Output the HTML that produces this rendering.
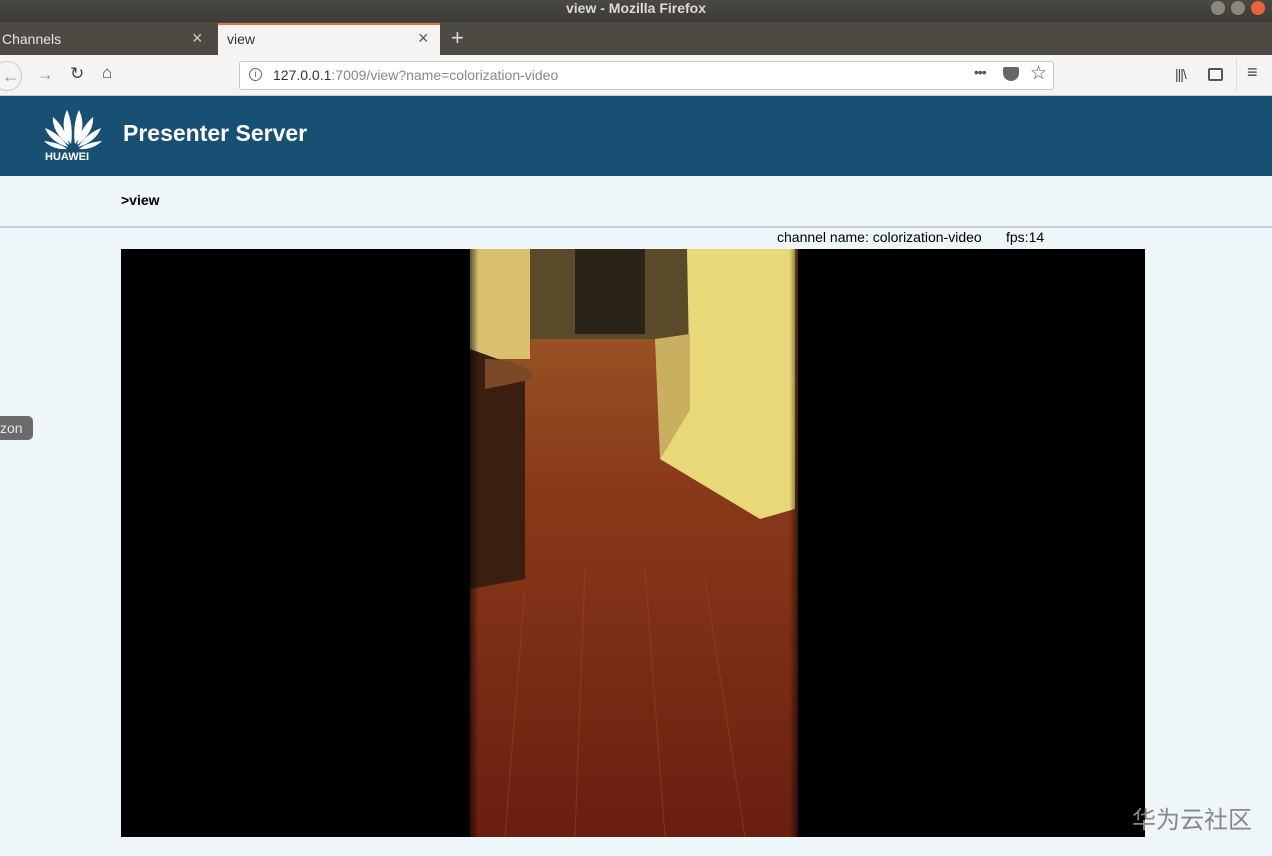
<!DOCTYPE html>
<html><head><meta charset="utf-8"><style>
*{margin:0;padding:0;box-sizing:border-box}
body{width:1272px;height:856px;overflow:hidden;background:#eef6f9;font-family:"Liberation Sans",sans-serif;position:relative}
.abs{position:absolute}
</style></head><body>
<div class="abs" style="left:0;top:0;width:1272px;height:22px;background:linear-gradient(#4a4843,#3d3b37);color:#dfdbd2;font-size:14px;font-weight:bold;text-align:center;line-height:16px">view - Mozilla Firefox</div>
<div class="abs" style="left:1211px;top:1px;width:14px;height:14px;border-radius:50%;background:#8a877f"></div>
<div class="abs" style="left:1231px;top:1px;width:14px;height:14px;border-radius:50%;background:#8a877f"></div>
<div class="abs" style="left:1251px;top:1px;width:14px;height:14px;border-radius:50%;background:#e8643a"></div>
<div class="abs" style="left:0;top:22px;width:1272px;height:33px;background:#4d4a44"></div>
<div class="abs" style="left:2px;top:31px;color:#e8e6e0;font-size:14px">Channels</div>
<div class="abs" style="left:192px;top:28px;color:#cfcbc3;font-size:18px">×</div>
<div class="abs" style="left:218px;top:23px;width:222px;height:32px;background:#f5f4f2;border-top:2px solid #e8704a"></div>
<div class="abs" style="left:227px;top:31px;color:#333;font-size:14px">view</div>
<div class="abs" style="left:418px;top:28px;color:#555;font-size:18px">×</div>
<div class="abs" style="left:451px;top:25px;color:#ddd;font-size:22px">+</div>
<div class="abs" style="left:0;top:55px;width:1272px;height:41px;background:#f5f4f2;border-bottom:1px solid #ccc"></div>
<div class="abs" style="left:-8px;top:61px;width:30px;height:30px;border-radius:50%;border:1px solid #ccc;color:#999;font-size:18px;text-align:center;line-height:28px;padding-left:8px">←</div>
<div class="abs" style="left:36px;top:64px;color:#999;font-size:18px">→</div>
<div class="abs" style="left:70px;top:64px;color:#444;font-size:17px">↻</div>
<div class="abs" style="left:102px;top:63px;color:#444;font-size:17px">⌂</div>
<div class="abs" style="left:239px;top:61px;width:815px;height:29px;background:#fff;border:1px solid #c8c8c8;border-radius:3px"></div>
<div class="abs" style="left:249px;top:68px;width:13px;height:13px;border:1px solid #666;border-radius:50%;font-size:9px;text-align:center;line-height:11px;color:#666">i</div>
<div class="abs" style="left:273px;top:67px;font-size:14px;color:#333">127.0.0.1<span style="color:#888">:7009/view?name=colorization-video</span></div>
<div class="abs" style="left:974px;top:64px;font-size:14px;color:#555;letter-spacing:-1px">•••</div>
<div class="abs" style="left:1003px;top:67px;width:16px;height:14px;background:#666;border-radius:2px 2px 8px 8px"></div>
<div class="abs" style="left:1030px;top:62px;font-size:19px;color:#555">☆</div>
<div class="abs" style="left:1175px;top:66px;font-size:14px;color:#444;letter-spacing:-1px">|||\</div>
<div class="abs" style="left:1208px;top:68px;width:15px;height:13px;border:2px solid #555;border-radius:2px"></div>
<div class="abs" style="left:1236px;top:58px;width:1px;height:34px;background:#ddd"></div>
<div class="abs" style="left:1247px;top:62px;font-size:18px;color:#444">≡</div>
<div class="abs" style="left:0;top:96px;width:1272px;height:80px;background:#185073"></div>
<svg class="abs" style="left:42px;top:106px" width="62" height="50" viewBox="0 0 62 50">
<g fill="#fff">
<path d="M29 38 C20 28 20 14 25 4 C29 12 31 26 29 38Z"/>
<path d="M33 38 C42 28 42 14 37 4 C33 12 31 26 33 38Z"/>
<path d="M27 39 C16 32 10 20 11 11 C19 18 25 28 27 39Z"/>
<path d="M35 39 C46 32 52 20 51 11 C43 18 37 28 35 39Z"/>
<path d="M26 41 C14 38 6 30 3 22 C13 26 21 33 26 41Z"/>
<path d="M36 41 C48 38 56 30 59 22 C49 26 41 33 36 41Z"/>
<path d="M25 43 C15 44 7 40 2 35 C11 36 19 38 25 43Z"/>
<path d="M37 43 C47 44 55 40 60 35 C51 36 43 38 37 43Z"/>
</g></svg>
<div class="abs" style="left:45px;top:151px;color:#fff;font-size:11px;font-weight:bold">HUAWEI</div>
<div class="abs" style="left:123px;top:120px;color:#fff;font-size:23px;font-weight:bold">Presenter Server</div>
<div class="abs" style="left:121px;top:192px;font-size:14px;font-weight:bold;color:#000">&gt;view</div>
<div class="abs" style="left:0;top:226px;width:1272px;height:2px;background:#c8d0d5"></div>
<div class="abs" style="left:777px;top:229px;font-size:14px;color:#000">channel name: colorization-video</div>
<div class="abs" style="left:1006px;top:229px;font-size:14px;color:#000">fps:14</div>
<div class="abs" style="left:-6px;top:416px;width:39px;height:24px;background:#6b6b6b;border-radius:5px;color:#e8e8e8;font-size:14px;line-height:24px;padding-left:6px">zon</div>
<div class="abs" style="left:121px;top:249px;width:1024px;height:588px;background:#000"></div>
<svg class="abs" style="left:465px;top:249px" width="338" height="588" viewBox="0 0 338 588">
<defs>
<linearGradient id="fl" x1="0" y1="0" x2="0" y2="1">
<stop offset="0" stop-color="#a0602a"/><stop offset="0.4" stop-color="#8a3a1a"/><stop offset="1" stop-color="#6a1e10"/></linearGradient>
<linearGradient id="edge" x1="0" y1="0" x2="1" y2="0">
<stop offset="0" stop-color="#000" stop-opacity="0.9"/><stop offset="0.04" stop-color="#000" stop-opacity="0"/><stop offset="0.96" stop-color="#000" stop-opacity="0"/><stop offset="1" stop-color="#000" stop-opacity="0.9"/></linearGradient>
</defs>
<rect x="5" y="0" width="328" height="588" fill="url(#fl)"/>
<rect x="5" y="0" width="60" height="110" fill="#d8c070"/>
<rect x="65" y="0" width="160" height="90" fill="#5a4a2a"/>
<rect x="110" y="0" width="70" height="85" fill="#2a2418"/>
<path d="M5 100 L60 120 L60 330 L5 340Z" fill="#3a1e10"/>
<path d="M222 0 L330 0 L330 260 L295 270 L195 210 L225 160Z" fill="#e8d878"/>
<path d="M190 90 L225 85 L225 160 L195 210Z" fill="#c8b060"/>
<path d="M20 110 Q60 110 70 130 L20 140Z" fill="#7a4a28"/>
<g stroke="#a04a25" stroke-width="1" opacity="0.5">
<line x1="60" y1="340" x2="40" y2="588"/><line x1="120" y1="320" x2="110" y2="588"/><line x1="180" y1="320" x2="200" y2="588"/><line x1="240" y1="330" x2="280" y2="588"/></g>
<rect x="0" y="0" width="338" height="588" fill="url(#edge)"/>
</svg>
<div class="abs" style="left:1132px;top:800px;font-size:24px;color:#888;font-family:'Liberation Sans','Noto Sans CJK SC',sans-serif;white-space:nowrap">华为云社区</div>
</body></html>
